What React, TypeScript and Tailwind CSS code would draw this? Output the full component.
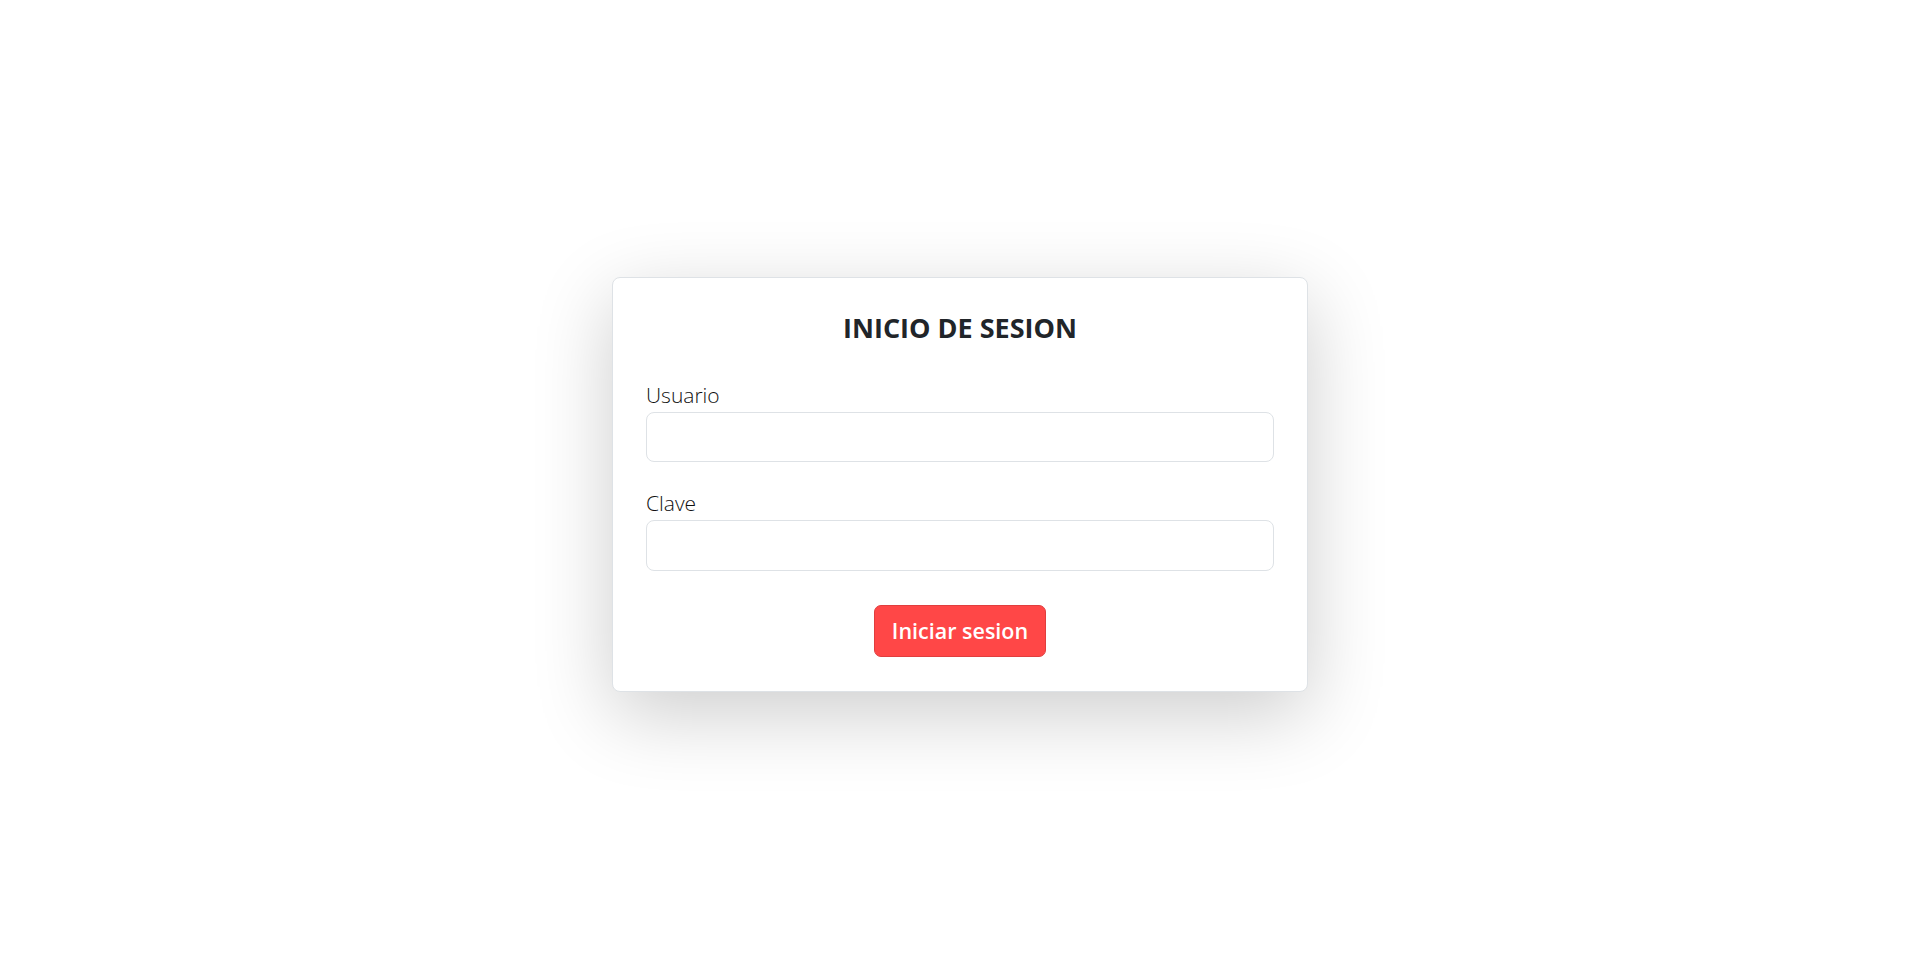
export default function App() {
  return (
    <div
      className="min-h-screen w-full bg-white flex items-center justify-center"
      style={{ fontFamily: '"Open Sans", "Noto Sans", sans-serif' }}
    >
      <div className="w-[696px] bg-white border border-[#dee2e6] rounded-[8px] shadow-[0_22px_80px_rgba(0,0,0,0.2)] px-[33px] pt-[30px] pb-[34px] flex flex-col">
        <h1 className="h-[40px] leading-[40px] text-center text-[27px] font-bold text-[#212529]">
          INICIO DE SESION
        </h1>
        <label className="mt-[34px] h-[30px] leading-[26px] text-[21px] font-light text-[#111111]">
          Usuario
        </label>
        <input
          type="text"
          className="h-[50px] w-full rounded-[8px] border border-[#dee2e6] bg-white px-3 outline-none"
        />
        <label className="mt-[28px] h-[30px] leading-[26px] text-[21px] font-light text-[#111111]">
          Clave
        </label>
        <input
          type="password"
          className="h-[51px] w-full rounded-[8px] border border-[#dee2e6] bg-white px-3 outline-none"
        />
        <div className="mt-[34px] flex justify-center">
          <button className="h-[52px] w-[172px] rounded-[7px] border border-[#e03e3e] bg-[#ff4747] text-white text-[21.5px] font-semibold">
            Iniciar sesion
          </button>
        </div>
      </div>
    </div>
  );
}
